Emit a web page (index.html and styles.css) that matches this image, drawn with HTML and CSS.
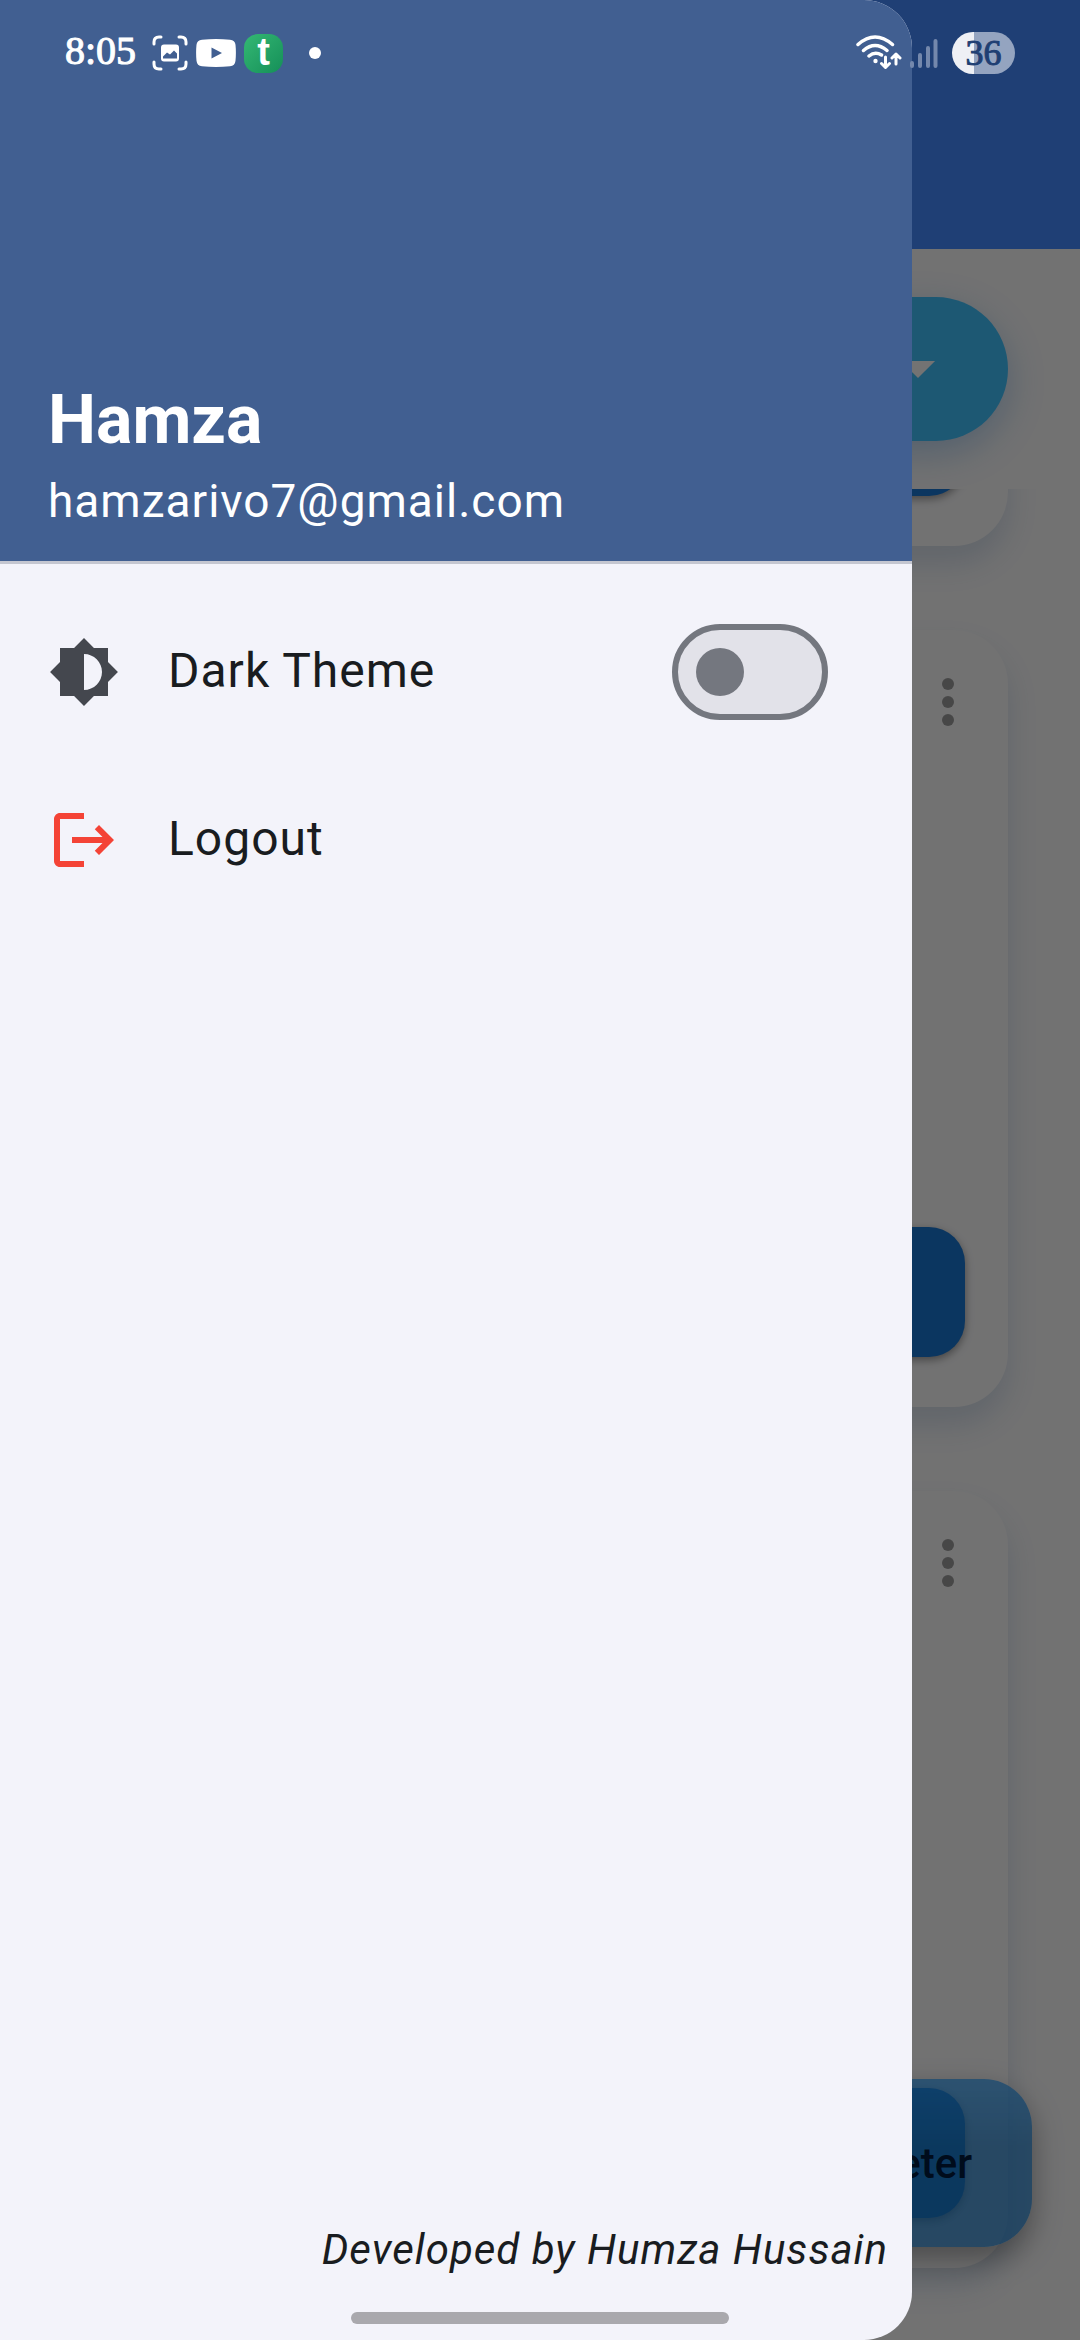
FILE: index.html
```html
<!DOCTYPE html>
<html lang="en">
<head>
<meta charset="utf-8">
<meta name="viewport" content="width=device-width, initial-scale=1">
<title>Meters</title>
<link rel="stylesheet" href="styles.css">
</head>
<body>
<div class="screen">
  <main class="page">
    <header class="app-bar"></header>
    <div class="filter">
      <button class="filter-button" type="button" aria-label="Choose meter">
        <svg class="icon" viewBox="0 0 24 24"><path fill="#fafafa" d="M6.3 9.3h11.4L12 15z"/></svg>
      </button>
    </div>
    <div class="cards">
      <article class="card">
        <button class="more" type="button" aria-label="More options"><svg class="icon" viewBox="0 0 24 24"><circle cx="12" cy="6" r="2"/><circle cx="12" cy="12" r="2"/><circle cx="12" cy="18" r="2"/></svg></button>
        <button class="card-action" type="button" aria-label="Open meter"></button>
      </article>
      <article class="card">
        <button class="more" type="button" aria-label="More options"><svg class="icon" viewBox="0 0 24 24"><circle cx="12" cy="6" r="2"/><circle cx="12" cy="12" r="2"/><circle cx="12" cy="18" r="2"/></svg></button>
        <button class="card-action" type="button" aria-label="Open meter"></button>
      </article>
      <article class="card">
        <button class="more" type="button" aria-label="More options"><svg class="icon" viewBox="0 0 24 24"><circle cx="12" cy="6" r="2"/><circle cx="12" cy="12" r="2"/><circle cx="12" cy="18" r="2"/></svg></button>
        <button class="card-action" type="button" aria-label="Open meter"></button>
      </article>
    </div>
    <button class="fab" type="button">Add Meter</button>
  </main>

  <div class="scrim"></div>

  <aside class="drawer">
    <header class="account">
      <h1 class="account-name">Hamza</h1>
      <p class="account-email">hamzarivo7@gmail.com</p>
    </header>
    <nav class="menu">
      <label class="tile" for="dark-theme">
        <svg class="icon tile-icon" viewBox="0 0 24 24"><path d="M20 15.31L23.31 12 20 8.69V4h-4.69L12 .69 8.69 4H4v4.69L.69 12 4 15.31V20h4.69L12 23.31 15.31 20H20v-4.69zM12 18V6c3.31 0 6 2.69 6 6s-2.69 6-6 6z"/></svg>
        <span class="tile-title">Dark Theme</span>
        <input class="switch" id="dark-theme" type="checkbox" role="switch">
      </label>
      <button class="tile" type="button">
        <svg class="icon tile-icon danger" viewBox="0 0 24 24"><path d="M17 7l-1.41 1.41L18.17 11H8v2h10.17l-2.58 2.58L17 17l5-5zM4 5h8V3H4c-1.1 0-2 .9-2 2v14c0 1.1.9 2 2 2h8v-2H4V5z"/></svg>
        <span class="tile-title">Logout</span>
      </button>
    </nav>
    <p class="credit">Developed by Humza Hussain</p>
  </aside>

  <div class="status-bar">
    <div class="status-left">
      <span class="clock">8:05</span>
      <svg class="capture" viewBox="0 0 36 36"><g fill="none" stroke="#fff" stroke-width="3" stroke-linecap="round"><path d="M2 9V7q0-5 5-5h2M27 2h2q5 0 5 5v2M34 27v2q0 5-5 5h-2M9 34H7q-5 0-5-5v-2"/></g><path fill="#fff" fill-rule="evenodd" d="M12 9.500h12q3 0 3 3v11q0 3-3 3H12q-3 0-3-3v-11q0-3 3-3zM11 23.500h14v-5l-3-3-4 4-3-2-4 4z"/></svg>
      <svg class="video" viewBox="0 0 40 28"><path fill="#fff" fill-rule="evenodd" d="M6 .8Q20-.6 34 .8q5 .6 5.500 5 .8 8 0 16-.5 5-5.500 5.500-14 1.400-28 0-5-.5-5.500-5.500-.8-8 0-16Q1 1.400 6 .8zM15.500 8.500v11l10.500-5.500z"/></svg>
      <span class="badge">t</span>
      <span class="dot"></span>
    </div>
    <div class="status-right">
      <svg class="wifi" viewBox="0 0 46 36"><g fill="none" stroke="#fff" stroke-width="3.500" stroke-linecap="round"><path d="M2 9.500q17-15 34.500 0M7.500 15.500q11.500-10 23.500 0M13 21q6-5 12.500-1"/></g><circle cx="19.500" cy="26" r="2.200" fill="#fff"/><path fill="none" stroke="#fff" stroke-width="3" stroke-linecap="round" stroke-linejoin="round" d="M29.500 22v10M25.500 28.500l4 4 4-4M40 29V19M36 23l4-4 4 4"/></svg>
      <svg class="signal" viewBox="0 0 28 30"><path stroke="#7488ac" stroke-width="4" stroke-linecap="round" d="M2 25v3M10 17v11M18 10v18M25.500 3v25"/></svg>
      <span class="battery">36</span>
    </div>
  </div>
  <div class="home-bar"></div>
</div>
</body>
</html>
```
FILE: styles.css
```css
* {
  box-sizing: border-box;
}

body {
  margin: 0;
  font-family: Roboto, "Noto Sans", sans-serif;
  color: #191c20;
}

button {
  border: 0;
  padding: 0;
  background: none;
  font: inherit;
  color: inherit;
}

h1,
p {
  margin: 0;
}

.icon {
  display: block;
  width: 72px;
  height: 72px;
}

.screen {
  position: relative;
  height: 100vh;
  overflow: hidden;
}

/* Page under the drawer */
.page {
  display: flex;
  flex-direction: column;
  height: 100%;
  background: #f8f8f9;
}

.app-bar {
  flex: none;
  height: 249px;
  background: #448aff;
}

.filter {
  flex: none;
  padding: 48px 72px;
}

.filter-button {
  display: flex;
  align-items: center;
  justify-content: flex-end;
  width: 100%;
  height: 144px;
  padding-right: 54px;
  border-radius: 72px;
  background: #40c0fb;
  box-shadow: 0 12px 36px rgba(25, 118, 210, 0.3);
}

.cards {
  flex: 1;
  display: flex;
  flex-direction: column;
  justify-content: flex-end;
  gap: 84px;
  min-height: 0;
  padding: 0 72px 72px;
  overflow: hidden;
}

.card {
  flex: none;
  display: flex;
  flex-direction: column;
  justify-content: space-between;
  height: 777px;
  padding: 36px 24px 50px;
  border-radius: 54px;
  background: #f8f8f9;
  box-shadow: 0 18px 30px rgba(25, 80, 150, 0.16);
}

.more {
  align-self: flex-end;
  fill: #9c9c9c;
}

.card-action {
  height: 130px;
  margin: 0 19px;
  border-radius: 36px;
  background: #1976d2;
  box-shadow: 0 3px 8px rgba(0, 0, 0, 0.4);
}

.fab {
  position: absolute;
  right: 48px;
  bottom: 93px;
  height: 168px;
  padding: 0 60px;
  border-radius: 48px;
  background: linear-gradient(rgba(0, 0, 0, 0), rgba(0, 0, 0, 0.12) 40%), rgba(33, 150, 243, 0.7);
  box-shadow: 0 12px 30px rgba(0, 0, 0, 0.35);
  font-size: 42px;
  font-weight: 500;
  color: #001b3e;
}

.scrim {
  position: absolute;
  inset: 0;
  background: rgba(0, 0, 0, 0.54);
}

/* Drawer */
.drawer {
  position: absolute;
  top: 0;
  bottom: 0;
  left: 0;
  display: flex;
  flex-direction: column;
  width: 912px;
  max-width: 100%;
  border-radius: 0 48px 48px 0;
  background: #f3f3fa;
  overflow: hidden;
}

.account {
  flex: none;
  display: flex;
  flex-direction: column;
  justify-content: flex-end;
  gap: 6px;
  height: 564px;
  padding: 0 48px 27px;
  border-bottom: 3px solid #c4c6d0;
  background: #415f91;
  color: #fff;
}

.account-name {
  font-size: 68px;
  line-height: 84px;
  font-weight: 700;
}

.account-email {
  font-size: 46px;
  line-height: 66px;
  letter-spacing: 1px;
}

.menu {
  padding-top: 24px;
}

.tile {
  display: flex;
  align-items: center;
  gap: 48px;
  width: 100%;
  height: 168px;
  padding: 0 84px 0 48px;
  text-align: left;
}

.tile-icon {
  fill: #44474e;
}

.danger {
  fill: #f44336;
}

.tile-title {
  flex: 1;
  padding-bottom: 2px;
  font-size: 48px;
  line-height: 72px;
  letter-spacing: 1px;
}

.switch {
  appearance: none;
  display: flex;
  align-items: center;
  width: 156px;
  height: 96px;
  margin: 0;
  padding: 0 18px;
  border: 6px solid #74777f;
  border-radius: 48px;
  background: #e2e2e9;
}

.switch::before {
  content: "";
  width: 48px;
  height: 48px;
  border-radius: 50%;
  background: #74777f;
}

.switch:checked {
  justify-content: flex-end;
}

.credit {
  margin-top: auto;
  padding: 0 24px 60px;
  font-size: 42px;
  line-height: 60px;
  font-style: italic;
  letter-spacing: 1px;
  text-align: right;
}

/* System overlays */
.status-bar {
  position: absolute;
  top: 0;
  left: 0;
  right: 0;
  display: flex;
  align-items: center;
  justify-content: space-between;
  height: 106px;
  padding: 0 65px;
  color: #fff;
  pointer-events: none;
}

.status-left,
.status-right {
  display: flex;
  align-items: center;
}

.status-left {
  gap: 8px;
}

.clock {
  margin-right: 8px;
  padding-bottom: 4px;
  font-family: "Liberation Serif", serif;
  font-size: 40px;
  line-height: 48px;
  -webkit-text-stroke: 1px #fff;
}

.capture {
  width: 36px;
  height: 36px;
}

.video {
  width: 40px;
  height: 28px;
}

.badge {
  width: 39px;
  height: 39px;
  border-radius: 14px;
  background: linear-gradient(135deg, #34b874, #158f58);
  font-family: "Liberation Sans", sans-serif;
  font-size: 38px;
  line-height: 36px;
  font-weight: 700;
  text-align: center;
}

.dot {
  width: 12px;
  height: 12px;
  margin-left: 18px;
  border-radius: 50%;
  background: #fff;
}

.wifi {
  width: 46px;
  height: 36px;
}

.signal {
  width: 28px;
  height: 30px;
  margin: 0 14px 0 8px;
}

.battery {
  width: 63px;
  height: 42px;
  border-radius: 21px;
  background: linear-gradient(90deg, #eef0f5 35%, #94a4c0 35%);
  font-family: "Liberation Serif", serif;
  font-size: 36px;
  line-height: 42px;
  text-align: center;
  color: #1f3f73;
  -webkit-text-stroke: 1px #1f3f73;
}

.home-bar {
  position: absolute;
  bottom: 16px;
  left: 50%;
  width: 378px;
  height: 12px;
  margin-left: -189px;
  border-radius: 6px;
  background: #a9a8ad;
}
```
